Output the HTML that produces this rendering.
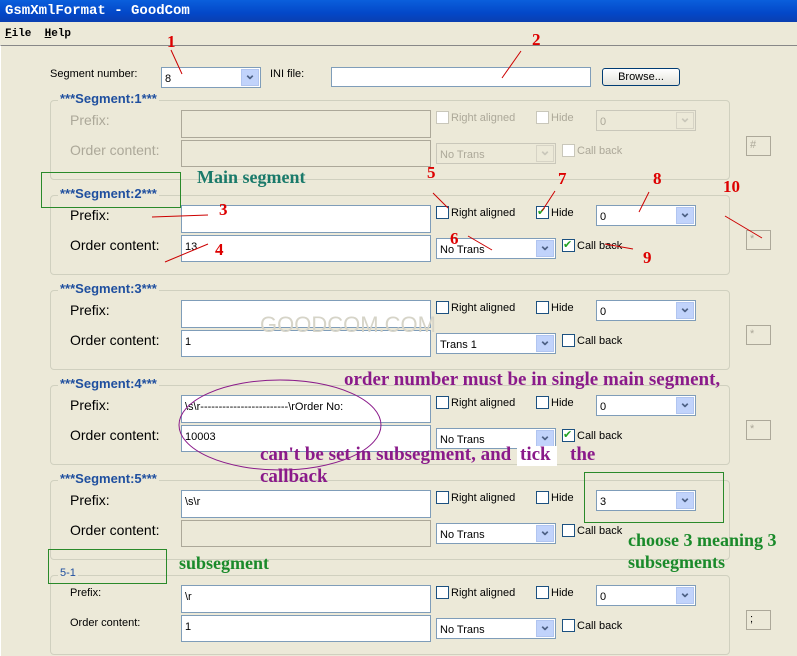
<!DOCTYPE html><html><head><meta charset="utf-8"><style>
*{margin:0;padding:0;box-sizing:border-box}
body{width:797px;height:656px;overflow:hidden;background:#ece9d8;font-family:"Liberation Sans",sans-serif;font-size:12px;position:relative;color:#000}
.a{position:absolute}
.title{left:0;top:0;width:797px;height:22px;background:linear-gradient(#0a5fdc,#0347c8 60%,#0a3fb0);color:#fff;font:bold 14px "Liberation Mono",monospace;padding:3px 5px}
.menu{left:0;top:22px;width:797px;height:22px;font:bold 11px "Liberation Mono",monospace;padding:6px 5px}
.frame{left:0;top:45px;width:797px;height:611px;border-top:1px solid #888;border-left:1px solid #fff}
.box{left:50px;width:680px;height:80px;border:1px solid #d0d0bf;border-radius:4px}
.lbl{font-weight:bold;color:#1f4f9f;font-size:13px;background:#ece9d8;padding:0 2px}
.fl{font-size:14px;color:#000}
.dis{color:#aca899}
.in{background:#fff;border:1px solid #7f9db9;font-size:11px;padding:5px 3px 0}
.in.d{background:#ece9d8;border-color:#aca899}
.cb{width:13px;height:13px;background:#fff;border:1px solid #1c5180}
.cb.d{border-color:#c9c7ba}
.ct{font-size:11px}
.dd{background:#fff;border:1px solid #7f9db9;font-size:11px;padding:5px 3px 0}
.dd::after{content:"⌄";position:absolute;right:1px;top:1px;bottom:1px;width:16px;background:#c1d3fb;border:1px solid #b1c5f0;color:#4d6185;font-weight:bold;font-size:14px;line-height:8px;text-align:center}
.dd.d{background:#ece9d8;border-color:#c9c7ba;color:#aca899}
.dd.d::after{background:#ece9d8;border-color:#d6d3c5;color:#c9c7ba}
.sm{width:25px;height:20px;border:1px solid #aca899;color:#aca899;font-size:11px;padding:2px 3px}
.red{color:#d00;font:bold 17px "Liberation Serif",serif}
.grn{color:#1a8a2a;font:bold 18px "Liberation Serif",serif}
.pur{color:#8a1a8a;font:bold 19px "Liberation Serif",serif;line-height:20px}
.gb{border:1px solid #2a8a2a}
</style></head><body>
<div class="a title">GsmXmlFormat - GoodCom</div>
<div class="a menu"><u>F</u>ile &nbsp;<u>H</u>elp</div>
<div class="a frame"></div>
<div class="a" style="left:50px;top:68px;font-size:11px">Segment number:</div>
<div class="a dd" style="left:161px;top:67px;width:100px;height:21px">8</div>
<div class="a" style="left:270px;top:68px;font-size:11px">INI file:</div>
<div class="a in" style="left:331px;top:67px;width:260px;height:20px"></div>
<div class="a" style="left:602px;top:68px;width:78px;height:18px;border:1px solid #003c74;border-radius:3px;background:linear-gradient(#fff,#e3e3db);font-size:11px;text-align:center;padding-top:2px">Browse...</div>

<div class="a box" style="top:100px"></div>
<div class="a lbl" style="left:58px;top:91px">***Segment:1***</div>
<div class="a fl dis" style="left:70px;top:112px">Prefix:</div>
<div class="a fl dis" style="left:70px;top:142px">Order content:</div>
<div class="a in d" style="left:181px;top:110px;width:250px;height:28px"></div>
<div class="a in d" style="left:181px;top:140px;width:250px;height:27px"></div>
<div class="a cb d" style="left:436px;top:111px"></div><div class="a ct dis" style="left:451px;top:112px">Right aligned</div>
<div class="a cb d" style="left:536px;top:111px"></div><div class="a ct dis" style="left:551px;top:112px">Hide</div>
<div class="a dd d" style="left:596px;top:110px;width:100px;height:21px">0</div>
<div class="a dd d" style="left:436px;top:143px;width:120px;height:21px">No Trans</div>
<div class="a cb d" style="left:562px;top:144px"></div><div class="a ct dis" style="left:577px;top:145px">Call back</div>
<div class="a sm" style="left:746px;top:136px">#</div>

<div class="a box" style="top:195px"></div>
<div class="a lbl" style="left:58px;top:186px">***Segment:2***</div>
<div class="a fl" style="left:70px;top:207px">Prefix:</div>
<div class="a fl" style="left:70px;top:237px">Order content:</div>
<div class="a in" style="left:181px;top:205px;width:250px;height:28px"></div>
<div class="a in" style="left:181px;top:235px;width:250px;height:27px">13</div>
<div class="a cb" style="left:436px;top:206px"></div><div class="a ct" style="left:451px;top:207px">Right aligned</div>
<div class="a cb" style="left:536px;top:206px;color:#21a121;font-size:11px;line-height:10px">✔</div><div class="a ct" style="left:551px;top:207px">Hide</div>
<div class="a dd" style="left:596px;top:205px;width:100px;height:21px">0</div>
<div class="a dd" style="left:436px;top:238px;width:120px;height:21px">No Trans</div>
<div class="a cb" style="left:562px;top:239px;color:#21a121;font-size:11px;line-height:10px">✔</div><div class="a ct" style="left:577px;top:240px">Call back</div>
<div class="a sm" style="left:746px;top:230px">*</div>

<div class="a box" style="top:290px"></div>
<div class="a lbl" style="left:58px;top:281px">***Segment:3***</div>
<div class="a fl" style="left:70px;top:302px">Prefix:</div>
<div class="a fl" style="left:70px;top:332px">Order content:</div>
<div class="a in" style="left:181px;top:300px;width:250px;height:28px"></div>
<div class="a in" style="left:181px;top:330px;width:250px;height:27px">1</div>
<div class="a cb" style="left:436px;top:301px"></div><div class="a ct" style="left:451px;top:302px">Right aligned</div>
<div class="a cb" style="left:536px;top:301px"></div><div class="a ct" style="left:551px;top:302px">Hide</div>
<div class="a dd" style="left:596px;top:300px;width:100px;height:21px">0</div>
<div class="a dd" style="left:436px;top:333px;width:120px;height:21px">Trans 1</div>
<div class="a cb" style="left:562px;top:334px"></div><div class="a ct" style="left:577px;top:335px">Call back</div>
<div class="a sm" style="left:746px;top:325px">*</div>

<div class="a box" style="top:385px"></div>
<div class="a lbl" style="left:58px;top:376px">***Segment:4***</div>
<div class="a fl" style="left:70px;top:397px">Prefix:</div>
<div class="a fl" style="left:70px;top:427px">Order content:</div>
<div class="a in" style="left:181px;top:395px;width:250px;height:28px">\s\r------------------------\rOrder No:</div>
<div class="a in" style="left:181px;top:425px;width:250px;height:27px">10003</div>
<div class="a cb" style="left:436px;top:396px"></div><div class="a ct" style="left:451px;top:397px">Right aligned</div>
<div class="a cb" style="left:536px;top:396px"></div><div class="a ct" style="left:551px;top:397px">Hide</div>
<div class="a dd" style="left:596px;top:395px;width:100px;height:21px">0</div>
<div class="a dd" style="left:436px;top:428px;width:120px;height:21px">No Trans</div>
<div class="a cb" style="left:562px;top:429px;color:#21a121;font-size:11px;line-height:10px">✔</div><div class="a ct" style="left:577px;top:430px">Call back</div>
<div class="a sm" style="left:746px;top:420px">*</div>

<div class="a box" style="top:480px"></div>
<div class="a lbl" style="left:58px;top:471px">***Segment:5***</div>
<div class="a fl" style="left:70px;top:492px">Prefix:</div>
<div class="a fl" style="left:70px;top:522px">Order content:</div>
<div class="a in" style="left:181px;top:490px;width:250px;height:28px">\s\r</div>
<div class="a in d" style="left:181px;top:520px;width:250px;height:27px"></div>
<div class="a cb" style="left:436px;top:491px"></div><div class="a ct" style="left:451px;top:492px">Right aligned</div>
<div class="a cb" style="left:536px;top:491px"></div><div class="a ct" style="left:551px;top:492px">Hide</div>
<div class="a dd" style="left:596px;top:490px;width:100px;height:21px">3</div>
<div class="a dd" style="left:436px;top:523px;width:120px;height:21px">No Trans</div>
<div class="a cb" style="left:562px;top:524px"></div><div class="a ct" style="left:577px;top:525px">Call back</div>

<div class="a box" style="top:575px"></div>
<div class="a" style="left:58px;top:567px;color:#1f4f9f;font-size:11px;background:#ece9d8;padding:0 2px">5-1</div>
<div class="a" style="left:70px;top:587px;font-size:11px">Prefix:</div>
<div class="a" style="left:70px;top:617px;font-size:11px">Order content:</div>
<div class="a in" style="left:181px;top:585px;width:250px;height:28px">\r</div>
<div class="a in" style="left:181px;top:615px;width:250px;height:27px">1</div>
<div class="a cb" style="left:436px;top:586px"></div><div class="a ct" style="left:451px;top:587px">Right aligned</div>
<div class="a cb" style="left:536px;top:586px"></div><div class="a ct" style="left:551px;top:587px">Hide</div>
<div class="a dd" style="left:596px;top:585px;width:100px;height:21px">0</div>
<div class="a dd" style="left:436px;top:618px;width:120px;height:21px">No Trans</div>
<div class="a cb" style="left:562px;top:619px"></div><div class="a ct" style="left:577px;top:620px">Call back</div>
<div class="a sm" style="left:746px;top:610px;color:#000">;</div>

<div class="a" style="left:260px;top:312px;font-size:22px;color:#d6d4c8">GOODCOM.COM</div>
<div class="a red" style="left:167px;top:32px">1</div>
<div class="a red" style="left:532px;top:30px">2</div>
<div class="a red" style="left:219px;top:200px">3</div>
<div class="a red" style="left:215px;top:240px">4</div>
<div class="a red" style="left:427px;top:163px">5</div>
<div class="a red" style="left:450px;top:229px">6</div>
<div class="a red" style="left:558px;top:169px">7</div>
<div class="a red" style="left:653px;top:169px">8</div>
<div class="a red" style="left:643px;top:248px">9</div>
<div class="a red" style="left:723px;top:177px">10</div>
<svg class="a" style="left:0;top:0" width="797" height="656"><g stroke="#c00" stroke-width="1" fill="none">
<line x1="171" y1="50" x2="182" y2="74"/><line x1="521" y1="51" x2="502" y2="78"/>
<line x1="152" y1="217" x2="208" y2="215"/><line x1="165" y1="262" x2="208" y2="244"/>
<line x1="433" y1="193" x2="448" y2="208"/><line x1="555" y1="191" x2="542" y2="211"/>
<line x1="649" y1="192" x2="639" y2="212"/><line x1="468" y1="236" x2="492" y2="250"/>
<line x1="605" y1="244" x2="633" y2="249"/><line x1="725" y1="216" x2="762" y2="238"/></g>
<ellipse cx="280" cy="425" rx="101" ry="45" stroke="#8a1a8a" fill="none"/></svg>
<div class="a gb" style="left:41px;top:172px;width:140px;height:36px"></div>
<div class="a grn" style="left:197px;top:167px;color:#1a7a6a">Main segment</div>
<div class="a pur" style="left:344px;top:370px">order number must be in single main segment,</div>
<div class="a pur" style="left:260px;top:445px">can't be set in subsegment, and</div>
<div class="a" style="left:517px;top:446px;background:#fff;width:40px;height:20px"></div>
<div class="a pur" style="left:520px;top:445px">tick</div>
<div class="a pur" style="left:570px;top:445px">the</div>
<div class="a pur" style="left:260px;top:467px">callback</div>
<div class="a gb" style="left:584px;top:472px;width:140px;height:51px"></div>
<div class="a grn" style="left:628px;top:530px">choose 3 meaning 3</div>
<div class="a grn" style="left:628px;top:552px">subsegments</div>
<div class="a gb" style="left:48px;top:549px;width:119px;height:35px"></div>
<div class="a grn" style="left:179px;top:553px">subsegment</div>
</body></html>
